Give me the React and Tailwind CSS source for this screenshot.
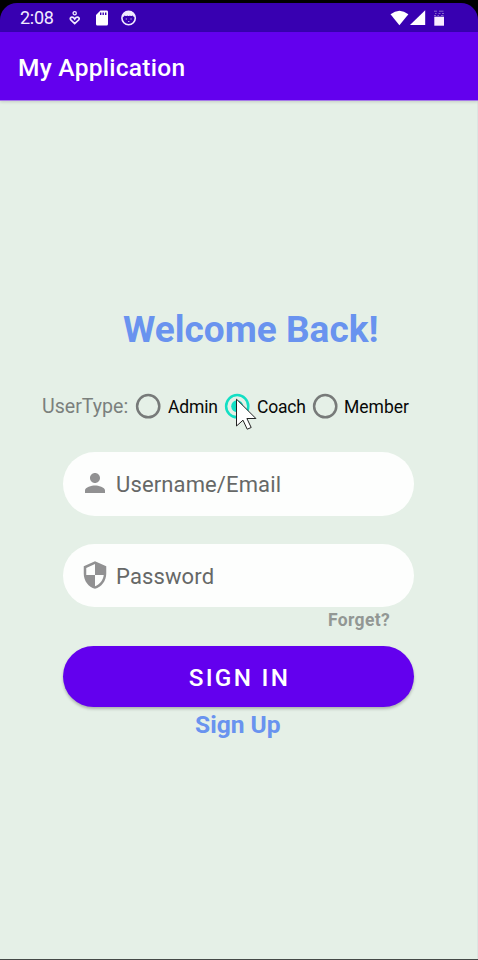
import React from "react";

function StatusBar() {
  return (
    <div className="flex h-[29px] items-center rounded-t-[17px] bg-[#3800b1] pl-[20px] pr-[34px]">
      <span className="w-[49px] text-[18px] leading-[29px] tracking-[-0.3px] text-[#f1ebff]">2:08</span>
      <svg className="h-4 w-3" viewBox="0 0 12 16" fill="none" stroke="#f1ebff">
        <circle cx="5.7" cy="3.2" r="1.6" strokeWidth="1.3" />
        <path d="M5.7 13.6L1.7 9.8Q.8 8.2 2 7.4q2-.9 3.7 1.6Q7.4 6.5 9.4 7.4q1.3.8.4 2.4z" strokeWidth="1.7" />
      </svg>
      <svg className="ml-[15px] h-4 w-3" viewBox="0 0 12 16">
        <path d="M4.4.4H10.6Q12 .4 12 1.8V14Q12 15.5 10.6 15.5H1.4Q0 15.5 0 14V5z" fill="#fff" />
        <path d="M4.7 2.4v2.7M7.2 2.4v2.7M9.7 2.4v2.7" stroke="#3800b1" strokeWidth="1.4" />
      </svg>
      <svg className="ml-[13px] h-4 w-4" viewBox="0 0 16 16">
        <circle cx="7.6" cy="8" r="6.7" fill="none" stroke="#f1ebff" strokeWidth="1.6" />
        <path d="M1.3 6.8Q2 2 7.6 1.5T14 6.8Q12.5 7.5 11.7 5.6Q10.5 6.5 8.9 5.4Q7.6 6.4 6.3 5.4Q4.7 6.5 3.6 5.6Q2.7 7.6 1.3 6.8z" fill="#f1ebff" />
        <path d="M4.7 9h1.3M9.4 9h1.3M7 11.5h1.4" stroke="#b9a0e6" strokeWidth="1.1" />
      </svg>
      <div className="ml-auto flex">
        <svg className="h-4 w-[54px]" viewBox="0 0 54 16">
          <path d="M.5 4.2Q9.4-2.8 18.4 4.2L9.4 15.2z" fill="#fff" />
          <path d="M35.2 .2V15H20z" fill="#fff" />
          <path d="M44.3 6.7H54V15.7H44.3z" fill="#f8edff" />
          <path d="M44 1.2h3M49 1.2h4.5M45 3.5h1.5M48.5 3.5h2M52 3.5h2M44 5.5h2M47.5 5.5h1.5M51 5.5h2.5" stroke="#8464cb" strokeWidth="1" />
        </svg>
      </div>
    </div>
  );
}

function Radio({ checked, label, className, labelClass }) {
  return (
    <label className={"flex items-center " + className}>
      <svg className="h-[26px] w-[26px] shrink-0" viewBox="0 0 26 26">
        <circle cx="13.2" cy="13.2" r="11.1" fill="none" stroke={checked ? "#12dfc4" : "#777a79"} strokeWidth="2.5" />
        {checked && <circle cx="13.2" cy="13.2" r="6" fill="#12dfc4" />}
      </svg>
      <span className={"whitespace-nowrap pt-px text-[17.5px] leading-[26px] text-[#080808] " + labelClass}>{label}</span>
    </label>
  );
}

function Field({ label, icon, className }) {
  return (
    <div className={"ml-[63px] flex w-[351px] items-center rounded-full bg-[#fdfefd] pl-[17px] " + className}>
      <svg className="h-[30px] w-[30px]" viewBox="0 0 24 24" fill="#919192">
        <path d={icon} />
      </svg>
      <span className="ml-[6px] pt-[3px] text-[22px] leading-[28px] tracking-[0.13px] text-[#666867]">{label}</span>
    </div>
  );
}

const PERSON = "M12 12c2.21 0 4-1.79 4-4s-1.79-4-4-4-4 1.79-4 4 1.79 4 4 4zm0 2c-2.67 0-8 1.34-8 4v2h16v-2c0-2.66-5.33-4-8-4z";
const SHIELD = "M12 1L3 5v6c0 5.55 3.84 10.74 9 12 5.16-1.26 9-6.45 9-12V5l-9-4zm0 10.99h7c-.53 4.12-3.28 7.79-7 8.94V12H5V6.3l7-3.11v8.8z";

export default function App() {
  return (
    <div className="h-[960px] w-[478px] overflow-hidden bg-black pt-[3px] font-['Roboto','Noto_Sans',sans-serif]">
      <StatusBar />
      <header className="relative flex h-[69px] items-center border-b border-[#a678e9] bg-[#6300ee] pl-[18px] pt-[3px] shadow-[0_1px_3px_rgba(0,0,0,0.15)]">
        <h1 className="whitespace-nowrap text-[24.5px] font-medium leading-[32px] tracking-[0.27px] text-white">My Application</h1>
      </header>
      <main className="h-[858px] border-r border-[#dce5e2] bg-[#e5f0e7] pt-[206px]">
        <h2 className="ml-[123px] whitespace-nowrap text-[37px] font-bold leading-[46px] text-[#6993ef]">Welcome Back!</h2>
        <div className="mt-[40px] flex h-[26px] items-center pl-[42px]">
          <span className="w-[93px] whitespace-nowrap pt-[2px] text-[19.6px] leading-[26px] text-[#7b807d]">UserType:</span>
          <Radio label="Admin" className="w-[89px]" labelClass="ml-[7px] tracking-[-0.15px]" />
          <div className="relative">
            <Radio label="Coach" checked className="w-[88px]" labelClass="ml-[7px] tracking-[-0.2px]" />
            <svg className="absolute left-[11px] top-[5px] h-[34px] w-[23px]" viewBox="0 0 23 34" fill="#fff" stroke="#222" strokeWidth="1">
              <path d="M1.5 1.2V28L8 22.2l4.2 9 4-1.7-4.3-9h9z" />
            </svg>
          </div>
          <Radio label="Member" className="w-[100px]" labelClass="ml-[6px]" />
        </div>
        <Field label="Username/Email" icon={PERSON} className="mt-[33px] h-[64px] pb-[2px]" />
        <Field label="Password" icon={SHIELD} className="mt-[28px] h-[63px] pb-px" />
        <a className="ml-[328px] mt-px block w-[80px] text-[17.5px] font-bold leading-[24px] tracking-[0.35px] text-[#929794]">Forget?</a>
        <button className="ml-[63px] mt-[14px] flex h-[61px] w-[351px] items-center justify-center rounded-full bg-[#6300ee] pt-[2px] shadow-[0_2px_3px_rgba(0,0,0,0.25)]">
          <span className="pl-[2px] text-[24.3px] font-medium leading-[32px] tracking-[2.3px] text-white">SIGN IN</span>
        </button>
        <a className="ml-[195px] mt-[2px] block w-[120px] text-[24.6px] font-bold leading-[32px] text-[#6993ef]">Sign Up</a>
      </main>
      <div className="h-px bg-[#444947]" />
    </div>
  );
}
